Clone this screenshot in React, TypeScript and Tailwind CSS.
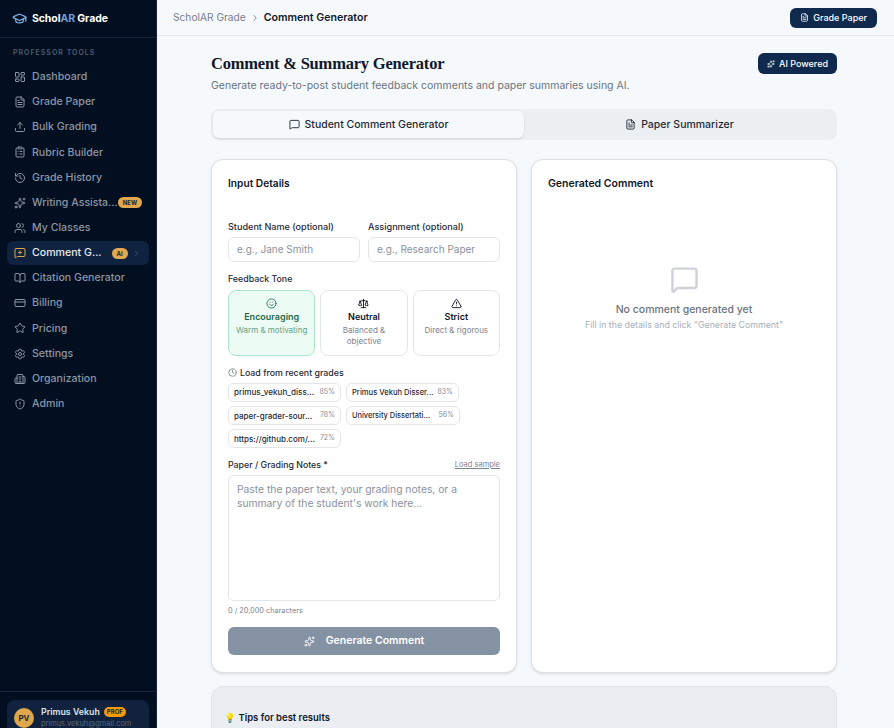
import {
  AlertTriangle,
  BookOpen,
  Building2,
  ChevronRight,
  ClipboardList,
  Clock,
  CreditCard,
  FileText,
  GraduationCap,
  History,
  LayoutDashboard,
  MessageSquare,
  MessageSquarePlus,
  Scale,
  Settings,
  ShieldAlert,
  Smile,
  Sparkles,
  Star,
  Upload,
  Users,
} from 'lucide-react';

const navItems = [
  { label: 'Dashboard', icon: LayoutDashboard },
  { label: 'Grade Paper', icon: FileText },
  { label: 'Bulk Grading', icon: Upload },
  { label: 'Rubric Builder', icon: ClipboardList },
  { label: 'Grade History', icon: History },
  { label: 'Writing Assista...', icon: Sparkles, badge: 'NEW' },
  { label: 'My Classes', icon: Users },
  { label: 'Comment G...', icon: MessageSquarePlus, badge: 'AI', active: true },
  { label: 'Citation Generator', icon: BookOpen },
  { label: 'Billing', icon: CreditCard },
  { label: 'Pricing', icon: Star },
  { label: 'Settings', icon: Settings },
  { label: 'Organization', icon: Building2 },
  { label: 'Admin', icon: ShieldAlert },
];

const recentRows = [
  [
    { name: 'primus_vekuh_diss...', score: '85%', width: 'w-[113px]', size: 'text-[8.1px]' },
    { name: 'Primus Vekuh Disser...', score: '83%', width: 'w-[113px]', size: 'text-[7.6px]' },
  ],
  [
    { name: 'paper-grader-sour...', score: '78%', width: 'w-[113px]', size: 'text-[8px]' },
    { name: 'University Dissertati...', score: '56%', width: 'w-[114px]', size: 'text-[7.4px]' },
  ],
  [{ name: 'https://github.com/...', score: '72%', width: 'w-[113px]', size: 'text-[8px]' }],
];

const Sidebar = () => (
  <aside className="flex h-full w-[157px] shrink-0 flex-col overflow-hidden border-r border-[#15243a] bg-[#020f20]">
    <div className="flex h-[38px] shrink-0 items-center gap-[5px] border-b border-[#13233a] pl-3">
      <GraduationCap className="h-[15px] w-[15px] text-[#7fb0e6]" />
      <span className="text-[10.5px] font-bold tracking-[-0.1px] text-white">
        Schol<span className="text-[#6d9fd8]">AR</span> Grade
      </span>
    </div>
    <div className="pl-[13px] pt-[10px] pb-[8px] text-[7px] font-semibold leading-[9px] tracking-[1px] text-[#4f5d70]">
      PROFESSOR TOOLS
    </div>
    <nav className="flex flex-col gap-px px-[7px]">
      {navItems.map((item) => {
        const Icon = item.icon;
        return (
          <div
            key={item.label}
            className={`flex h-[24.15px] items-center rounded-md pl-[7px] pr-2 ${item.active ? 'bg-[#0f2240] text-[#e5e9ef]' : 'text-[#8b95a5]'}`}
          >
            <Icon className={`h-3 w-3 shrink-0 ${item.active ? 'text-[#dfa64c]' : ''}`} />
            <span className="ml-[6px] whitespace-nowrap text-[10.6px] font-medium">{item.label}</span>
            {item.badge && (
              <span className={`flex h-[11px] items-center rounded-full bg-[#e3a84f] px-[5px] text-[6px] font-bold text-[#1d2430] ${item.active ? 'ml-[10px]' : 'ml-auto mr-[-1px]'}`}>
                {item.badge}
              </span>
            )}
            {item.active && <ChevronRight className="ml-auto h-[9px] w-[9px] text-[#4f5d70]" />}
          </div>
        );
      })}
    </nav>
    <div className="mt-auto h-[37px] shrink-0 border-t border-[#15243a] px-[7px] pt-[8px]">
      <div className="flex h-[44px] items-start gap-[7px] rounded-lg bg-[#10223d] pl-[7px] pt-[6px]">
        <div className="mt-[2px] flex h-5 w-5 shrink-0 items-center justify-center rounded-full bg-[#dfa64c] text-[8px] font-bold text-[#1d2430]">
          PV
        </div>
        <div className="min-w-0">
          <div className="flex items-center gap-[4px]">
            <span className="whitespace-nowrap text-[8.8px] font-semibold leading-3 text-[#dfe4ea]">Primus Vekuh</span>
            <span className="rounded-full bg-[#f49a0c] px-[3px] text-[6px] font-bold leading-[10px] text-[#1d2430]">PROF</span>
          </div>
          <div className="whitespace-nowrap text-[7.4px] leading-[11px] text-[#5b6879]">primus.vekuh@gmail.com</div>
        </div>
      </div>
    </div>
  </aside>
);

const ToneCard = ({ icon: Icon, title, sub, active }: { icon: typeof Smile; title: string; sub: string; active?: boolean }) => (
  <div
    className={`flex h-[66px] flex-col items-center rounded-lg border pt-[7px] text-center ${active ? 'border-[#a9e6cb] bg-[#ecfbf4]' : 'border-[#e2e6ea] bg-white'}`}
  >
    <Icon className={`h-[11px] w-[11px] ${active ? 'text-[#1f7a55]' : 'text-[#111827]'}`} />
    <div className={`mt-[1px] text-[9px] font-semibold leading-[13px] ${active ? 'text-[#1f6b4c]' : 'text-[#111827]'}`}>{title}</div>
    <div className={`mt-[2px] whitespace-pre-line text-[8px] leading-[11px] ${active ? 'text-[#63a388]' : 'text-[#7b8490]'}`}>{sub}</div>
  </div>
);

const App = () => {
  return (
    <div className="flex h-screen overflow-hidden bg-[#f5f9fc] font-['Inter',sans-serif]">
      <Sidebar />
      <div className="flex min-w-0 flex-1 flex-col">
        {/* Top bar */}
        <header className="flex h-[36px] shrink-0 items-center border-b border-[#e3e7eb] pl-4 pr-[17px]">
          <span className="text-[10.2px] text-[#78818d]">ScholAR Grade</span>
          <ChevronRight className="mx-[4px] h-[10px] w-[10px] text-[#6b7480]" />
          <span className="text-[10.6px] font-semibold text-[#111827]">Comment Generator</span>
          <button className="ml-auto flex h-[20px] items-center gap-[4px] rounded-md bg-[#0f2a4d] px-[10px] text-[9px] font-medium text-white">
            <FileText className="h-[9px] w-[9px]" />
            Grade Paper
          </button>
        </header>

        <main className="min-h-0 flex-1 overflow-hidden pl-[54px] pr-[57px]">
          <div className="flex items-start justify-between pt-[17px]">
            <div>
              <h1 className="font-['Liberation_Serif',serif] text-[16.5px] font-bold leading-[22px] tracking-[-0.2px] text-[#111827]">
                Comment &amp; Summary Generator
              </h1>
              <p className="mt-[1px] text-[10.5px] leading-[19px] text-[#6b7480]">
                Generate ready-to-post student feedback comments and paper summaries using AI.
              </p>
            </div>
            <div className="flex h-[21px] items-center gap-[4px] rounded-md bg-[#0f2a4d] px-[9px] text-[9px] font-medium text-white">
              <Sparkles className="h-[8px] w-[8px]" />
              AI Powered
            </div>
          </div>

          {/* Tabs */}
          <div className="mt-[14px] grid h-[31px] grid-cols-2 rounded-lg bg-[#eceff2] p-[2px]">
            <div className="flex items-center justify-center gap-[5px] rounded-md bg-[#f5f9fc] text-[10.5px] font-medium text-[#1f2937] shadow-sm">
              <MessageSquare className="h-[11px] w-[11px]" />
              Student Comment Generator
            </div>
            <div className="flex items-center justify-center gap-[5px] text-[10.5px] font-medium text-[#1f2937]">
              <FileText className="h-[11px] w-[11px]" />
              Paper Summarizer
            </div>
          </div>

          <div className="mt-[19px] grid grid-cols-2 gap-[14px]">
            {/* Input card */}
            <section className="h-[514px] rounded-xl border border-[#dde2e6] bg-white px-4 pt-[16px] shadow-sm">
              <h2 className="text-[10.2px] font-semibold leading-[14px] text-[#111827]">Input Details</h2>
              <div className="mt-[30px] grid grid-cols-2 gap-2">
                <div>
                  <label className="block text-[9.1px] font-medium leading-[13px] text-[#1f2937]">Student Name (optional)</label>
                  <div className="mt-[4px] flex h-[25px] items-center rounded-md border border-[#e2e6ea] pl-[8px] text-[10px] text-[#8a929d]">
                    e.g., Jane Smith
                  </div>
                </div>
                <div>
                  <label className="block text-[9.1px] font-medium leading-[13px] text-[#1f2937]">Assignment (optional)</label>
                  <div className="mt-[4px] flex h-[25px] items-center rounded-md border border-[#e2e6ea] pl-[8px] text-[10px] text-[#8a929d]">
                    e.g., Research Paper
                  </div>
                </div>
              </div>

              <div className="mt-[11px] text-[8.8px] font-medium leading-[12px] text-[#1f2937]">Feedback Tone</div>
              <div className="mt-[5px] grid grid-cols-3 gap-[5px]">
                <ToneCard icon={Smile} title="Encouraging" sub="Warm & motivating" active />
                <ToneCard icon={Scale} title="Neutral" sub={'Balanced &\nobjective'} />
                <ToneCard icon={AlertTriangle} title="Strict" sub="Direct & rigorous" />
              </div>

              <div className="mt-[10px] flex items-center gap-[3px] text-[8.8px] font-medium leading-[13px] text-[#1f2937]">
                <Clock className="h-[9px] w-[9px] text-[#6b7480]" />
                Load from recent grades
              </div>
              <div className="mt-[4px] flex flex-col gap-[4px]">
                {recentRows.map((row) => (
                  <div key={row[0].name} className="flex gap-[5px]">
                    {row.map((chip) => (
                      <div
                        key={chip.name}
                        className={`flex h-[19px] items-center justify-between rounded-md border border-[#e2e6ea] pl-[5px] pr-[5px] ${chip.width}`}
                      >
                        <span className={`whitespace-nowrap font-medium text-[#1f2937] ${chip.size}`}>{chip.name}</span>
                        <span className="text-[7px] text-[#868e99]">{chip.score}</span>
                      </div>
                    ))}
                  </div>
                ))}
              </div>

              <div className="mt-[10px] flex items-center justify-between">
                <span className="text-[8.8px] font-medium leading-[13px] text-[#1f2937]">Paper / Grading Notes *</span>
                <span className="text-[7.5px] text-[#7b8490] underline">Load sample</span>
              </div>
              <div className="mt-[4px] h-[126px] rounded-md border border-[#e2e6ea] px-[8px] py-[6px] text-[10.3px] leading-[14px] text-[#8a929d]">
                Paste the paper text, your grading notes, or a summary of the student's work here...
              </div>
              <div className="mt-[5px] text-[7.3px] leading-[10px] text-[#7b8490]">0 / 20,000 characters</div>
              <button className="mt-[11px] flex h-[28px] w-full items-center justify-center gap-[11px] rounded-md bg-[#8592a3] text-[10.5px] font-semibold text-white">
                <Sparkles className="h-[11px] w-[11px]" />
                Generate Comment
              </button>
            </section>

            {/* Output card */}
            <section className="flex h-[514px] flex-col rounded-xl border border-[#dde2e6] bg-white px-4 pt-[17px] shadow-sm">
              <h2 className="text-[10.5px] font-semibold leading-[14px] text-[#111827]">Generated Comment</h2>
              <div className="mt-[74px] flex flex-col items-center">
                <MessageSquare className="h-[29px] w-[29px] text-[#cfd3d8]" />
                <div className="mt-[9px] text-[10.5px] font-medium leading-[14px] text-[#6b7480]">No comment generated yet</div>
                <div className="mt-[1px] text-[8.8px] leading-[14px] text-[#a9afb8]">Fill in the details and click "Generate Comment"</div>
              </div>
            </section>
          </div>

          {/* Tips */}
          <section className="mt-[13px] h-[120px] rounded-xl border border-[#e0e4e8] bg-[#eaedf1] pl-3 pt-[24px]">
            <div className="text-[9.5px] font-semibold leading-[13px] text-[#111827]">💡 Tips for best results</div>
          </section>
        </main>
      </div>
    </div>
  );
};

export default App;
